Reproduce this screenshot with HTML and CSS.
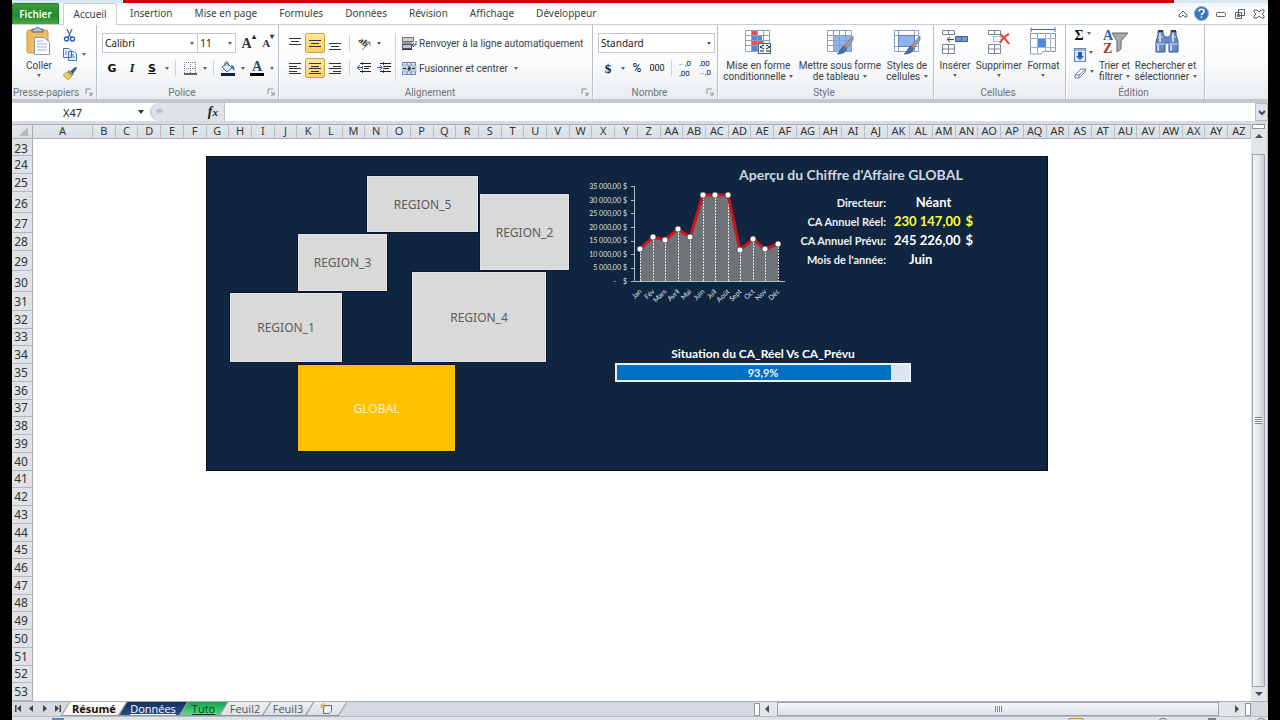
FILE: index.html
```html
<!DOCTYPE html>
<html lang="fr">
<head>
<meta charset="utf-8">
<title>Tableau de bord</title>
<link rel="stylesheet" href="styles.css">
</head>
<body>
<svg class="defs" aria-hidden="true">
  <symbol id="launch" viewBox="0 0 8 8"><path d="M1 6V1H6M4 4L7 7M7 4V7H4" fill="none" stroke="#8a9099"/></symbol>
  <symbol id="brush" viewBox="0 0 18 20"><path d="M17 1L8 11L11 13L17 5Z" fill="#9aa1aa" stroke="#626a75" stroke-width=".7"/><path d="M8 11L11 13C10 18 5 19 1 19C5 17 4 13 8 11Z" fill="#456fae" stroke="#294f87" stroke-width=".7"/><path d="M7.500 10.500L9 9L12 12L11 14Z" fill="#c08a50"/></symbol>
</svg>
<div class="app">
  <div class="title-strip"><i></i></div>
  <nav class="tabs">
    <button class="file">Fichier</button>
    <button class="active">Accueil</button>
    <button>Insertion</button>
    <button>Mise en page</button>
    <button>Formules</button>
    <button>Données</button>
    <button>Révision</button>
    <button>Affichage</button>
    <button>Développeur</button>
    <div class="window-tools">
      <button aria-label="Réduire le ruban"><svg width="10" height="10" viewBox="0 0 10 10"><path d="M1 6L5 2L9 6V8H7L5 6L3 8H1Z" fill="#fff" stroke="#59616c"/></svg></button>
      <button aria-label="Aide"><svg width="15" height="15" viewBox="0 0 15 15"><circle cx="7.500" cy="7.500" r="7" fill="#3d74bd" stroke="#8ba9d4"/><path d="M5 5.500C5 2.500 10 2.500 10 5.500C10 7.200 7.500 7 7.500 9.200M7.500 10.500V12" fill="none" stroke="#fff" stroke-width="1.600"/></svg></button>
      <button aria-label="Réduire"><svg width="12" height="12" viewBox="0 0 12 12"><rect x="1.500" y="4.500" width="9" height="4" rx="1" fill="#fff" stroke="#59616c"/></svg></button>
      <button aria-label="Restaurer"><svg width="12" height="12" viewBox="0 0 12 12"><path d="M4.500 1.500H10.500V7.500H4.500Z M1.500 4.500H7.500V10.500H1.500Z" fill="#fff" stroke="#59616c"/><path d="M3.500 6.500H5.500V8.500H3.500Z" fill="none" stroke="#59616c"/></svg></button>
      <button aria-label="Fermer"><svg width="12" height="12" viewBox="0 0 12 12"><path d="M1 2H4L6 4L8 2H11V4L9 6L11 8V10H8L6 8L4 10H1V8L3 6L1 4Z" fill="#fff" stroke="#59616c"/></svg></button>
    </div>
  </nav>

  <div class="ribbon">
    <section class="group clipboard">
      <div class="body">
        <button class="big">
          <svg width="28" height="30" viewBox="0 0 28 30"><rect x="2" y="3" width="21" height="23" rx="2" fill="#eebb60" stroke="#d09a3f"/><path d="M7 5V2H10C10 0 15 0 15 2H18V5Z" fill="#b9c1ca" stroke="#5c6570"/><path d="M9.500 10.500H19L24.500 15V27.500H9.500Z" fill="#fff" stroke="#8798ae"/><path d="M12 14H18M12 17H22M12 20H22M12 23H22" stroke="#9fb4d3"/></svg>
          <span>Coller</span><i class="arrow"></i>
        </button>
        <div class="stack">
          <button aria-label="Couper"><svg width="13" height="13" viewBox="0 0 13 13"><path d="M4 0L8 9M9 0L5 9" stroke="#5b7193" stroke-width="1.300"/><circle cx="3.500" cy="10" r="2" fill="none" stroke="#2b5fb0" stroke-width="1.400"/><circle cx="9.500" cy="10" r="2" fill="none" stroke="#2b5fb0" stroke-width="1.400"/></svg></button>
          <button aria-label="Copier"><svg width="14" height="13" viewBox="0 0 14 13"><path d="M.5 .5H6L8.500 3V9.500H.5Z M5.500 3.500H11L13.500 6V12.500H5.500Z" fill="#e8f0fb" stroke="#4a72ae"/><path d="M2 4H4M2 6H4M7 7H11M7 9H12" stroke="#4a86d3"/></svg><i class="arrow"></i></button>
          <button aria-label="Reproduire la mise en forme"><svg width="14" height="13" viewBox="0 0 14 13"><path d="M13 0L8 4L10 6L13 2Z" fill="#495e87" stroke="#394b70"/><path d="M6 3L11 7L9 9L4 5Z" fill="#7f8a9c"/><path d="M4 5L9 9L5 13L0 8Z" fill="#f0c95f" stroke="#b88b2c" stroke-width=".7"/></svg></button>
        </div>
      </div>
      <footer><span>Presse-papiers</span><svg class="launch"><use href="#launch"/></svg></footer>
    </section>

    <section class="group font">
      <div class="body rows">
        <div class="row">
          <label class="combo family"><select aria-label="Police"><option>Calibri</option></select></label>
          <label class="combo size"><select aria-label="Taille"><option>11</option></select></label>
          <button class="tool serif grow" aria-label="Agrandir la police">A<sup>▴</sup></button>
          <button class="tool serif shrink" aria-label="Réduire la police">A<sup>▾</sup></button>
        </div>
        <div class="row">
          <button class="tool bold">G</button>
          <button class="tool italic">I</button>
          <button class="tool under">S</button>
          <button class="drop" aria-label="Options de soulignement"><i class="arrow"></i></button>
          <i class="sep"></i>
          <button class="tool" aria-label="Bordures"><svg width="13" height="13" viewBox="0 0 13 13"><path d="M.5 0V12M6.500 0V12M11.500 0V12M0 .5H12M0 6.500H12" stroke="#7f8791" stroke-dasharray="1 1"/><path d="M0 12H13" stroke="#333" stroke-width="1.500"/></svg></button>
          <button class="drop" aria-label="Choix de bordures"><i class="arrow"></i></button>
          <i class="sep"></i>
          <button class="tool" aria-label="Remplissage"><svg width="15" height="15" viewBox="0 0 15 15"><path d="M6 2L11 7L6 11L1 6Z" fill="#e1eaf6" stroke="#47648f"/><path d="M4 5V2C4 0 7 0 7 2V5" fill="none" stroke="#47648f"/><path d="M10 4C13 4 14 8 13 10L11 7Z" fill="#2e6fc5"/><path d="M0 12H14V15H0Z" fill="#0c2256"/></svg></button>
          <button class="drop" aria-label="Couleurs de remplissage"><i class="arrow"></i></button>
          <button class="tool serif color">A</button>
          <button class="drop" aria-label="Couleurs de police"><i class="arrow"></i></button>
        </div>
      </div>
      <footer><span>Police</span><svg class="launch"><use href="#launch"/></svg></footer>
    </section>

    <section class="group align">
      <div class="body">
        <div class="rows">
          <div class="row">
            <button class="tool" aria-label="Aligner en haut"><svg width="13" height="13" viewBox="0 0 13 13"><path d="M0 1.500H12M2 4.500H10M0 7.500H12" stroke="#333"/></svg></button>
            <button class="tool on" aria-label="Aligner au centre"><svg width="13" height="13" viewBox="0 0 13 13"><path d="M0 3.500H12M2 6.500H10M0 9.500H12" stroke="#333"/></svg></button>
            <button class="tool" aria-label="Aligner en bas"><svg width="13" height="13" viewBox="0 0 13 13"><path d="M0 6.500H12M2 9.500H10M0 12.500H12" stroke="#333"/></svg></button>
            <i class="sep"></i>
            <button class="tool" aria-label="Orientation"><svg class="orient" width="15" height="13" viewBox="0 0 15 13"><g transform="translate(1 4) rotate(40)"><text>ab</text></g><path d="M5 13L13 5M13 9V5H9" fill="none" stroke="#777"/></svg></button>
            <button class="drop" aria-label="Choix d'orientation"><i class="arrow"></i></button>
          </div>
          <div class="row">
            <button class="tool" aria-label="Aligner à gauche"><svg width="13" height="13" viewBox="0 0 13 13"><path d="M0 1.500H12M0 4.500H8M0 6.500H12M0 9.500H8M0 11.500H12" stroke="#333"/></svg></button>
            <button class="tool on" aria-label="Centrer"><svg width="13" height="13" viewBox="0 0 13 13"><path d="M0 1.500H12M2 4.500H10M0 6.500H12M2 9.500H10M0 11.500H12" stroke="#333"/></svg></button>
            <button class="tool" aria-label="Aligner à droite"><svg width="13" height="13" viewBox="0 0 13 13"><path d="M0 1.500H12M4 4.500H12M0 6.500H12M4 9.500H12M0 11.500H12" stroke="#333"/></svg></button>
            <i class="sep"></i>
            <button class="tool" aria-label="Diminuer le retrait"><svg width="14" height="12" viewBox="0 0 14 12"><path d="M3 1.500H14M7 4.500H14M7 6.500H12M3 9.500H14" stroke="#222"/><path d="M6 5.500H0M3 3L0 5.500L3 8" fill="none" stroke="#2d65bb"/><path d="M5.500 0V12" stroke="#555" stroke-dasharray="1 1"/></svg></button>
            <button class="tool" aria-label="Augmenter le retrait"><svg width="14" height="12" viewBox="0 0 14 12"><path d="M3 1.500H14M7 4.500H14M7 6.500H12M3 9.500H14" stroke="#222"/><path d="M0 5.500H5M3 3L5 5.500L3 8" fill="none" stroke="#2d65bb"/><path d="M6.500 0V12" stroke="#555" stroke-dasharray="1 1"/></svg></button>
          </div>
        </div>
        <i class="sep tall"></i>
        <div class="rows">
          <button class="row wide"><svg width="15" height="13" viewBox="0 0 15 13"><rect x=".5" y=".5" width="11" height="4" fill="#c9ceca" stroke="#777"/><rect x=".5" y="7.500" width="9" height="4" fill="#b8c8e0" stroke="#555"/><path d="M0 6H10M0 12.500H10" stroke="#333"/><path d="M14 4V8H11M12 6L10 8L12 10" fill="none" stroke="#31527f"/></svg>Renvoyer à la ligne automatiquement</button>
          <button class="row wide"><svg width="15" height="13" viewBox="0 0 15 13"><path d="M.5 .5H13.500V12.500H.5Z M5 0V3M9 0V3M5 10V12M9 10V12" fill="#e6edf7" stroke="#6280aa"/><rect x="0" y="3" width="14" height="7" fill="#bfd1ea" stroke="#6280aa" stroke-width=".5"/><path d="M1 6.500H4M13 6.500H10M6 5H8V8H6V6.500H8" fill="none" stroke="#222"/></svg>Fusionner et centrer<i class="arrow"></i></button>
        </div>
      </div>
      <footer><span>Alignement</span><svg class="launch"><use href="#launch"/></svg></footer>
    </section>

    <section class="group number">
      <div class="body rows">
        <div class="row"><label class="combo format"><select aria-label="Format de nombre"><option>Standard</option></select></label></div>
        <div class="row">
          <button class="tool serif dollar">$</button>
          <button class="drop" aria-label="Formats monétaires"><i class="arrow"></i></button>
          <button class="tool pct">%</button>
          <button class="tool zeros">000</button>
          <i class="sep"></i>
          <button class="tool decimals"><span><b>←</b>,0</span><span>,00</span></button>
          <button class="tool decimals"><span>,00</span><span><b>→</b>,0</span></button>
        </div>
      </div>
      <footer><span>Nombre</span><svg class="launch"><use href="#launch"/></svg></footer>
    </section>

    <section class="group style">
      <div class="body">
        <button class="big">
          <svg width="28" height="30" viewBox="0 0 28 30"><rect x="1.500" y="3.500" width="24" height="21" fill="#fff"/><path d="M8 3H14V9H8Z M8 14H19V19H8Z" fill="#e0534f"/><path d="M8 9H18V14H8Z M8 19H13V24H8Z" fill="#5b82dc"/><path d="M1.500 3.500H25.500V24.500H1.500Z M1 8.500H26M1 13.500H26M1 18.500H26M7.500 3V25M13.500 3V25M19.500 3V25" fill="none" stroke="#8ba0c2"/><rect x="14.500" y="16.500" width="12" height="10" fill="#f5f8fc" stroke="#52657e"/><path d="M20 18L16 20L20 22M16 24H20M22 18L26 20L22 22M22 24H26" fill="none" stroke="#222"/></svg>
          <span>Mise en forme</span><span>conditionnelle <i class="arrow"></i></span>
        </button>
        <button class="big">
          <svg width="28" height="30" viewBox="0 0 28 30"><rect x="1.500" y="3.500" width="24" height="21" fill="#fff"/><rect x="7" y="9" width="19" height="16" fill="#8fb4ed"/><path d="M1.500 3.500H25.500V24.500H1.500Z M1 8.500H26M1 13.500H26M1 18.500H26M7.500 3V25M13.500 3V25M19.500 3V25" fill="none" stroke="#8ba0c2"/><use href="#brush" x="10" y="8" width="18" height="20"/></svg>
          <span>Mettre sous forme</span><span>de tableau <i class="arrow"></i></span>
        </button>
        <button class="big">
          <svg width="28" height="30" viewBox="0 0 28 30"><path d="M1.500 3.500H25.500V24.500H1.500Z M1 8.500H26M1 19.500H26M5.500 3V25M21.500 3V25" fill="#fff" stroke="#8ba0c2"/><rect x="5.500" y="8.500" width="16" height="11" fill="#8fb4ed" stroke="#5c83bd"/><use href="#brush" x="10" y="8" width="18" height="20"/></svg>
          <span>Styles de</span><span>cellules <i class="arrow"></i></span>
        </button>
      </div>
      <footer><span>Style</span></footer>
    </section>

    <section class="group cells">
      <div class="body">
        <button class="big">
          <svg width="28" height="30" viewBox="0 0 28 30"><path d="M1.500 3.500H13.500V7.500H1.500Z M7.500 3V8M1.500 17.500H13.500V26.500H1.500Z M1 22H14M7.500 17V27" fill="#fff" stroke="#778699"/><path d="M14.500 9.500H26.500V14.500H14.500Z M20.500 9V15" fill="#7599dc" stroke="#375ca1"/><path d="M13 12.500H6M9 10L6 12.500L9 15" fill="none" stroke="#31527f"/></svg>
          <span>Insérer</span><i class="arrow"></i>
        </button>
        <button class="big">
          <svg width="28" height="30" viewBox="0 0 28 30"><path d="M3.500 3.500H15.500V7.500H3.500Z M9.500 3V8M3.500 17.500H15.500V26.500H3.500Z M3 22H16M9.500 17V27" fill="#fff" stroke="#778699"/><path d="M8.500 9.500H16V14.500H8.500Z" fill="#fff" stroke="#5c7dab" stroke-dasharray="1 1"/><path d="M15 7C19 10 21 13 24 17M24 7C20 9 17 12 15 16" fill="none" stroke="#df4436" stroke-width="2"/></svg>
          <span>Supprimer</span><i class="arrow"></i>
        </button>
        <button class="big">
          <svg width="28" height="30" viewBox="0 0 28 30"><path d="M2 2.500H26M2 .5V5M26 .5V5" stroke="#3a6cb3"/><path d="M1.500 6.500H26.500V24.500H14L12 27H1.500Z" fill="#fff" stroke="#8499b9"/><path d="M1 11.500H27M1 20.500H27M8.500 6V26M16.500 6V25M21.500 6V25" stroke="#a0b4d1"/><rect x="9" y="12" width="8" height="8" fill="#4f88e0"/></svg>
          <span>Format</span><i class="arrow"></i>
        </button>
      </div>
      <footer><span>Cellules</span></footer>
    </section>

    <section class="group edit">
      <div class="body">
        <div class="stack">
          <button class="serif sigma" aria-label="Somme">Σ<i class="arrow"></i></button>
          <button aria-label="Remplissage"><svg width="12" height="14" viewBox="0 0 12 14"><rect x=".5" y=".5" width="11" height="13" fill="#dce7f7" stroke="#6b8ab9"/><path d="M1 2H11" stroke="#6b8ab9"/><path d="M4 4H8V8H10L6 12L2 8H4Z" fill="#235dc0"/></svg><i class="arrow"></i></button>
          <button aria-label="Effacer"><svg width="13" height="12" viewBox="0 0 13 12"><path d="M7 1H12L11 4L5 10H1V7Z M1 7H5L11 2M5 7V10" fill="#fff" stroke="#6d7f9c"/></svg><i class="arrow"></i></button>
        </div>
        <button class="big">
          <svg width="28" height="30" viewBox="0 0 28 30"><text x="2" y="13" class="icon-a">A</text><text x="2" y="26" class="icon-z">Z</text><path d="M11 6H27L20 14V22L16 25V14Z" fill="#a5a9ae" stroke="#666b72"/></svg>
          <span>Trier et</span><span>filtrer <i class="arrow"></i></span>
        </button>
        <button class="big">
          <svg width="28" height="30" viewBox="0 0 28 30"><path d="M5 4H10V7L12 10H16L18 7V4H23V8L25 15V25H16V16H12V25H3V15L5 8Z" fill="#688bc5" stroke="#35568d"/><path d="M5 4H10M18 4H23" stroke="#2a3e63" stroke-width="2"/><path d="M3 17H12M16 17H25M5 10H10M18 10H23" stroke="#d5e2f7"/><path d="M5 18V24M18 18V24M7 6V15M20 6V15" stroke="#c6d7f2" stroke-width="2"/></svg>
          <span>Rechercher et</span><span>sélectionner <i class="arrow"></i></span>
        </button>
      </div>
      <footer><span>Édition</span></footer>
    </section>
  </div>

  <div class="formula-bar">
    <label class="name-box"><input aria-label="Zone Nom" value="X47"><i class="arrow"></i></label>
    <div class="fx"><i></i><button><em>f</em>x</button></div>
    <input class="formula" aria-label="Barre de formule">
    <button class="expand" aria-label="Développer"><svg width="8" height="6" viewBox="0 0 8 6"><path d="M1 1L4 4L7 1" fill="none" stroke="#444b55" stroke-width="2"/></svg></button>
  </div>

  <main class="workbook">
    <div class="corner"><svg width="10" height="10" viewBox="0 0 10 10"><path d="M9 0V9H0Z" fill="#b4bac2"/></svg></div>
    <div class="columns">
      <span class="first">A</span><span>B</span><span>C</span><span>D</span><span>E</span><span>F</span><span>G</span><span>H</span><span>I</span><span>J</span><span>K</span><span>L</span><span>M</span><span>N</span><span>O</span><span>P</span><span>Q</span><span>R</span><span>S</span><span>T</span><span>U</span><span>V</span><span>W</span><span>X</span><span>Y</span><span>Z</span><span>AA</span><span>AB</span><span>AC</span><span>AD</span><span>AE</span><span>AF</span><span>AG</span><span>AH</span><span>AI</span><span>AJ</span><span>AK</span><span>AL</span><span>AM</span><span>AN</span><span>AO</span><span>AP</span><span>AQ</span><span>AR</span><span>AS</span><span>AT</span><span>AU</span><span>AV</span><span>AW</span><span>AX</span><span>AY</span><span>AZ</span>
    </div>
    <div class="vscroll"><i class="split"></i><i class="up"></i><div class="thumb"><i></i></div><i class="down"></i></div>
    <div class="row-heads">
      <span class="h17">23</span><span class="h18">24</span><span class="h18">25</span><span class="h21">26</span><span class="h20">27</span><span class="h18">28</span><span class="h20">29</span><span class="h21">30</span><span class="h19">31</span><span>32</span><span>33</span><span>34</span><span>35</span><span>36</span><span>37</span><span>38</span><span>39</span><span>40</span><span>41</span><span>42</span><span>43</span><span>44</span><span>45</span><span>46</span><span>47</span><span>48</span><span>49</span><span>50</span><span>51</span><span>52</span><span>53</span>
    </div>
    <div class="sheet">
      <div class="dashboard">
        <button class="region r5">REGION_5</button>
        <button class="region r2">REGION_2</button>
        <button class="region r3">REGION_3</button>
        <button class="region r4">REGION_4</button>
        <button class="region r1">REGION_1</button>
        <button class="region global">GLOBAL</button>

        <svg class="chart" width="200" height="124" viewBox="588 180 200 124" role="img" aria-label="Chiffre d'affaires mensuel">
          <path d="M640 281V249L653 237L665 240L678 229L690 237L703 195L715 195L728 195L740 250L753 239L765 249L778 244V281Z" fill="#6f7276"/>
          <path d="M640.500 249V281M653.500 237V281M665.500 240V281M678.500 229V281M690.500 237V281M703.500 195V281M715.500 195V281M728.500 195V281M740.500 250V281M753.500 239V281M765.500 249V281M778.500 244V281" stroke="#e3e5e8" stroke-dasharray="2 1"/>
          <path d="M634.500 186V281.500H785M631 186.500H634M631 200.500H634M631 213.500H634M631 227.500H634M631 241.500H634M631 254.500H634M631 268.500H634M631 281.500H634" fill="none" stroke="#a9bccb"/>
          <path d="M640 249L653 237L665 240L678 229L690 237L703 195L715 195L728 195L740 250L753 239L765 249L778 244" fill="none" stroke="#c9151b" stroke-width="3"/>
          <g fill="#fff" stroke="#222" stroke-width=".6"><circle cx="640" cy="249" r="3"/><circle cx="653" cy="237" r="3"/><circle cx="665" cy="240" r="3"/><circle cx="678" cy="229" r="3"/><circle cx="690" cy="237" r="3"/><circle cx="703" cy="195" r="3"/><circle cx="715" cy="195" r="3"/><circle cx="728" cy="195" r="3"/><circle cx="740" cy="250" r="3"/><circle cx="753" cy="239" r="3"/><circle cx="765" cy="249" r="3"/><circle cx="778" cy="244" r="3"/></g>
          <g class="scale"><text x="621" y="189">35 000,00</text><text x="621" y="203">30 000,00</text><text x="621" y="216">25 000,00</text><text x="621" y="230">20 000,00</text><text x="621" y="243">15 000,00</text><text x="621" y="257">10 000,00</text><text x="621" y="270">5 000,00</text><text x="616" y="284">-</text><text x="627" y="189">$</text><text x="627" y="203">$</text><text x="627" y="216">$</text><text x="627" y="230">$</text><text x="627" y="243">$</text><text x="627" y="257">$</text><text x="627" y="270">$</text><text x="627" y="284">$</text></g>
          <g class="months"><text transform="translate(642 292) rotate(-45)">Jan</text><text transform="translate(655 292) rotate(-45)">Fév</text><text transform="translate(667 292) rotate(-45)">Mars</text><text transform="translate(680 292) rotate(-45)">Avril</text><text transform="translate(692 292) rotate(-45)">Mai</text><text transform="translate(705 292) rotate(-45)">Juin</text><text transform="translate(717 292) rotate(-45)">Juil</text><text transform="translate(730 292) rotate(-45)">Août</text><text transform="translate(742 292) rotate(-45)">Sept</text><text transform="translate(755 292) rotate(-45)">Oct</text><text transform="translate(767 292) rotate(-45)">Nov</text><text transform="translate(780 292) rotate(-45)">Déc</text></g>
        </svg>

        <div class="summary">
          <h1>Aperçu du Chiffre d'Affaire GLOBAL</h1>
          <dl>
            <dt>Directeur:</dt><dd class="name">Néant</dd>
            <dt>CA Annuel Réel:</dt><dd class="real"><span>230 147,00</span><span>$</span></dd>
            <dt>CA Annuel Prévu:</dt><dd><span>245 226,00</span><span>$</span></dd>
            <dt>Mois de l'année:</dt><dd class="month">Juin</dd>
          </dl>
        </div>

        <div class="situation">
          <h2>Situation du CA_Réel Vs CA_Prévu</h2>
          <div class="bar"><i style="width:93.9%"></i><span>93,9%</span></div>
        </div>
      </div>
    </div>
  </main>

  <div class="sheet-bar">
    <div class="sheet-nav">
      <button aria-label="Première feuille"><svg width="7" height="7" viewBox="0 0 7 7"><path d="M0 0H1.500V7H0Z M6 0V7L2 3.500Z"/></svg></button>
      <button aria-label="Feuille précédente"><svg width="7" height="7" viewBox="0 0 7 7"><path d="M5 0V7L1 3.500Z"/></svg></button>
      <button aria-label="Feuille suivante"><svg width="7" height="7" viewBox="0 0 7 7"><path d="M2 0V7L6 3.500Z"/></svg></button>
      <button aria-label="Dernière feuille"><svg width="7" height="7" viewBox="0 0 7 7"><path d="M1 0V7L5 3.500Z M5.500 0H7V7H5.500Z"/></svg></button>
    </div>
    <div class="sheet-tabs">
      <button class="current">Résumé</button>
      <button class="navy">Données</button>
      <button class="green">Tuto</button>
      <button>Feuil2</button>
      <button>Feuil3</button>
      <button class="new" aria-label="Insérer une feuille"><svg width="13" height="12" viewBox="0 0 13 12"><path d="M3.500 2.500H11.500V8L9 10.500H3.500Z" fill="#eaf1fb" stroke="#49699b"/><path d="M3 0V6M0 3H6M1 1L5 5M5 1L1 5" stroke="#e2a135"/></svg></button>
    </div>
    <div class="hscroll"><i class="split"></i><i class="left"></i><div class="thumb"><i></i></div><i class="right"></i><i class="split"></i></div>
  </div>
  <div class="status"><i class="macro"></i><i class="view"></i><i class="zoom-btn"></i><i class="knob"></i><i class="zoom-btn"></i></div>
</div>
</body>
</html>
```
FILE: styles.css
```css
* { box-sizing: border-box; }
body { margin: 0; background: #000; color: #3b3f45; font: 10px/11px Roboto, "Open Sans", sans-serif; }
button { padding: 0; border: 0; background: none; color: inherit; font: inherit; white-space: nowrap; }
input, select { min-width: 0; border: 0; border-radius: 0; background: #fff; color: #222; font: inherit; }
svg { flex: none; }
.defs { display: none; }
.app { display: flex; flex-direction: column; height: 100vh; min-height: 600px; margin: 0 12px; background: #e0e4e9; overflow: hidden; }

.title-strip { flex: none; height: 3px; padding: 0 94px 0 111px; background: #d8e8f3; }
.title-strip i { display: block; height: 3px; background: #ce0000; }

.tabs { display: flex; flex: none; height: 22px; background: linear-gradient(#eef4fa, #fff 6px); border-bottom: 1px solid #c8cdd3; font-family: "Noto Sans", sans-serif; }
.tabs > button { padding: 0 11px; }
.tabs .file { width: 47px; padding: 0; border: 1px solid #257b2b; border-bottom: 0; border-radius: 2px 2px 0 0; background: linear-gradient(#3d9b3c, #248a2b 60%, #4ca847); color: #fff; font-weight: 600; }
.tabs .active { height: 22px; width: 54px; margin: 0 2px 0 4px; padding: 0; border: 1px solid #c8cdd3; border-bottom: 0; border-radius: 3px 3px 0 0; background: #fff; }
.window-tools { display: flex; gap: 4px; margin-left: auto; padding-right: 2px; }
.window-tools button { width: 15px; display: grid; place-items: center; }

.ribbon { display: flex; flex: none; height: 74px; background: linear-gradient(#fff, #fafbfc 50%, #e9ecf0); }
.group { display: flex; flex-direction: column; flex: none; border-right: 1px solid #b9bec5; box-shadow: 1px 0 #fff; }
.clipboard { width: 85px; }
.font { width: 182px; }
.align { width: 314px; }
.number { width: 125px; }
.style { width: 216px; }
.cells { width: 132px; }
.edit { width: 139px; }
.body { display: flex; flex: 1; min-height: 0; }
.group footer { display: flex; align-items: center; height: 14px; padding: 0 3px 0 0; color: #6c727b; }
.group footer span { flex: 1; text-align: center; }
.clipboard footer span { text-align: left; padding-left: 1px; }
.launch { width: 8px; height: 8px; }
.rows { display: flex; flex-direction: column; gap: 5px; padding: 8px 0 0 5px; }
.row { display: flex; align-items: center; height: 20px; }
.arrow { display: inline-block; flex: none; border: 2px solid transparent; border-top: 3px solid #5b6169; border-bottom: 0; vertical-align: middle; }
.tool { display: grid; place-items: center; width: 20px; height: 20px; color: #111; }
.tool.on { border: 1px solid #c9a344; border-radius: 2px; background: linear-gradient(#ffe8a0, #fdd25d); }
.align .rows .row { padding-left: 1px; }
.drop { display: grid; place-items: center; width: 9px; height: 20px; }
.sep { flex: none; width: 1px; height: 16px; margin: 0 4px; background: #d0d4d9; }
.sep.tall { height: 48px; margin: 8px 0 0 1px; }
.combo { position: relative; height: 20px; border: 1px solid #c5c9cf; background: #fff; }
.combo::after { content: ""; position: absolute; right: 3px; top: 8px; border: 2px solid transparent; border-top: 3px solid #5b6169; border-bottom: 0; }
.combo select { width: 100%; height: 18px; padding: 0 2px; appearance: none; background: transparent; font-family: "Noto Sans", sans-serif; }
.family { width: 98px; }
.size { width: 38px; border-left: 0; }
.format { width: 117px; }
.serif { font-family: "Liberation Serif", serif; font-weight: bold; }
.grow, .shrink { display: flex; align-items: flex-end; justify-content: center; padding-bottom: 3px; color: #333; line-height: 13px; }
.grow { font-size: 14px; margin-left: 3px; }
.shrink { font-size: 11px; }
.tool sup { align-self: flex-start; font-size: 8px; line-height: 8px; }
.bold { font: bold 11px "DejaVu Sans", sans-serif; }
.italic { font: italic bold 12px "Liberation Serif", serif; }
.under { font: bold 11px "DejaVu Sans", sans-serif; text-decoration: underline; }
.color { height: 15px; border: 3px solid transparent; border-width: 0 3px 3px; font-size: 14px; line-height: 12px; color: #2b4675; background: linear-gradient(#000, #000) 3px 12px / 14px 3px no-repeat border-box; }
.wide { gap: 2px; }
.wide .arrow { margin-left: 4px; }
.orient { overflow: visible; }
.orient text { font: bold 9px "Liberation Serif", serif; fill: #222; }
.dollar { font-size: 13px; }
.pct { font-size: 12px; }
.zeros { font-size: 9px; }
.decimals { display: block; font-size: 8px; line-height: 9px; text-align: right; padding: 1px 3px 0 0; }
.decimals span { display: block; }
.decimals b { color: #2e64b0; font-size: 7px; }
.big { display: flex; flex-direction: column; align-items: center; padding-top: 2px; }
.big svg { margin-bottom: 3px; }
.big .arrow { margin-top: 3px; }
.big span .arrow { margin: 0 0 1px 1px; }
.clipboard .big { width: 48px; margin-left: 3px; }
.stack { display: flex; flex-direction: column; padding-top: 1px; }
.stack button { display: flex; align-items: center; gap: 5px; height: 19px; }
.style .body, .cells .body { justify-content: space-evenly; }
.edit .body { justify-content: space-evenly; padding: 0 3px 0 4px; }
.edit .stack button { gap: 3px; }
.edit .stack .arrow { margin: 0 0 5px; }
.edit .big svg { margin-left: 2px; }
.sigma { font-size: 14px; color: #111; }
.icon-a, .icon-z { font: bold 14px "Liberation Serif", serif; }
.icon-a { fill: #2e63ae; }
.icon-z { fill: #9d352a; }

.formula-bar { display: flex; flex: none; height: 25px; border: solid #d8dce1; border-width: 4px 0 3px; border-top-color: #c3c8ce; background: #fff; }
.name-box { display: flex; align-items: center; width: 138px; padding-right: 6px; }
.name-box input { flex: 1; height: 16px; padding: 0 5px 0 0; text-align: center; font: 11px "Noto Sans", sans-serif; }
.name-box .arrow { border-width: 3px; border-top-width: 4px; border-bottom: 0; border-top-color: #333; }
.fx { display: flex; align-items: center; justify-content: space-between; width: 75px; padding: 0 6px 0 5px; border: 1px solid #b9bec5; border-width: 0 1px; border-radius: 10px 0 0 10px; background: #dfe3e8; }
.fx i { width: 7px; height: 7px; border-radius: 50%; background: linear-gradient(#a9afb7, #e8ebef); }
.fx button { font: italic bold 11px "Liberation Serif", serif; color: #222; }
.fx em { font-size: 14px; }
.formula { flex: 1; }
.expand { width: 13px; border: 1px solid #b5bac1; background: #e0e4e9; }

.workbook { display: grid; flex: 1; min-height: 0; grid-template: 15px minmax(0, 1fr) / 21px minmax(0, 1fr) 15px; padding-right: 1px; border-right: 1px solid #bcc1c8; font-family: "Noto Sans", sans-serif; }
.corner, .columns span { border: solid #a9afb7; border-width: 1px 1px 1px 0; background: linear-gradient(#e3e7ec, #dbe0e6); }
.corner { display: grid; place-items: center end; padding-right: 3px; }
.columns { display: flex; color: #333; font-size: 11px; line-height: 12px; }
.columns span { flex: 1 1 0; min-width: 0; text-align: center; border-right-color: #b9bec5; }
.columns .first { flex: 0 0 60px; }
.vscroll { display: flex; flex-direction: column; align-items: center; grid-row: 1 / 3; grid-column: 3; background: #e2e5ea; }
.split { flex: none; border: 1px solid #8b929c; background: #fff; }
.vscroll .split { width: 13px; height: 5px; }
.up, .down { margin: 5px 0 16px; border: 4px solid transparent; border-bottom: 4px solid #484f5a; border-top: 0; }
.down { margin: 5px 0; border-top: 4px solid #484f5a; border-bottom: 0; }
.thumb { display: grid; place-items: center; flex: 1; border: 1px solid #9da3ad; }
.vscroll .thumb { width: 13px; background: linear-gradient(90deg, #f5f6f8, #e1e4e9 60%, #c9cdd5); }
.vscroll .thumb i { width: 7px; height: 7px; background: repeating-linear-gradient(#7d848f 0 1px, #fff 1px 2px); }
.row-heads { display: flex; flex-direction: column; color: #333; font-size: 12px; background: #dfe3e8; border-right: 1px solid #a9afb7; }
.row-heads span { display: flex; align-items: flex-end; justify-content: center; flex: 1 1 0; min-height: 0; padding: 0 2px 2px 0; line-height: 13px; border-bottom: 1px solid #b2b8c0; }
.row-heads .h17 { flex: 0 0 17px; padding-bottom: 0; }
.row-heads .h18 { flex: 0 0 18px; }
.row-heads .h19 { flex: 0 0 19px; }
.row-heads .h20 { flex: 0 0 20px; }
.row-heads .h21 { flex: 0 0 21px; }
.sheet { position: relative; background: #fff; overflow: hidden; }

.dashboard { position: absolute; left: 173px; top: 17px; width: 842px; height: 315px; border: 1px solid #06101f; background: #10253f; color: #eef1f5; font-family: Lato, sans-serif; font-weight: bold; }
.region { position: absolute; background: #d9d9d9; border: 1px solid #e4e4e4; outline: 1px solid #071830; color: #5c5c5c; font: 12px "Noto Sans", sans-serif; }
.r5 { left: 160px; top: 19px; width: 111px; height: 56px; }
.r2 { left: 273px; top: 37px; width: 89px; height: 76px; }
.r3 { left: 91px; top: 77px; width: 89px; height: 57px; }
.r4 { left: 205px; top: 115px; width: 134px; height: 90px; }
.r1 { left: 23px; top: 136px; width: 112px; height: 69px; }
.global { left: 91px; top: 208px; width: 157px; height: 86px; border-color: #ffc000; background: #ffc000; color: #fff3d0; }
.chart { position: absolute; left: 381px; top: 23px; }
.chart text { fill: #dbe2ea; font-size: 7px; font-weight: normal; text-anchor: end; }
.chart .scale text { font-family: Lato, sans-serif; }
.chart .months text { font-size: 7px; }
.summary { position: absolute; left: 532px; top: 9px; width: 234px; }
.summary h1 { margin: 0 0 10px; font-size: 14px; line-height: 17px; color: #cfd8e4; white-space: nowrap; }
.summary dl { display: grid; grid-template-columns: 89px 79px; grid-auto-rows: 19px; column-gap: 8px; margin: 0; padding-left: 58px; align-items: center; }
.summary dt { text-align: right; font-size: 11px; white-space: nowrap; }
.summary dd { display: flex; justify-content: space-between; margin: 0; color: #fff; font-size: 13px; white-space: nowrap; }
.summary .name { justify-content: center; }
.summary .month { padding-left: 15px; }
.summary .real { color: #ffff3c; }
.situation { position: absolute; left: 408px; top: 189px; width: 296px; }
.situation h2 { margin: 0 0 2px; font-size: 12px; line-height: 15px; text-align: center; color: #fff; }
.bar { position: relative; display: flex; height: 19px; border: 2px solid #eaf1fa; background: #dce6f2; }
.bar i { background: #0070c0; }
.bar span { position: absolute; inset: 0; font-size: 11px; line-height: 15px; text-align: center; }

.sheet-bar { display: flex; flex: none; height: 15px; border-top: 1px solid #a9afb7; background: #d5dae1; }
.sheet-nav { display: flex; gap: 5px; padding: 0 8px 0 2px; }
.sheet-nav button { width: 8px; height: 13px; display: grid; place-items: center; fill: #3d4550; }
.sheet-tabs { display: flex; gap: 7px; color: #555; font: 11px/14px "Open Sans", sans-serif; }
.sheet-tabs button { position: relative; z-index: 0; width: 36px; }
.sheet-tabs button::before { content: ""; position: absolute; z-index: -1; inset: 0 -4px; transform: skewX(-32deg); border: solid #8f969f; border-width: 0 1px 1px; background: linear-gradient(#eceff3, #dde1e7); }
.sheet-tabs .current { width: 50px; color: #111; font-weight: bold; }
.sheet-tabs .current::before { background: linear-gradient(#fff, #fdf0e5); }
.sheet-tabs .navy { width: 54px; color: #fff; text-decoration: underline; }
.sheet-tabs .navy::before { background: linear-gradient(#16305f, #264d8c); }
.sheet-tabs .green { width: 33px; color: #123d21; text-decoration: underline; }
.sheet-tabs .green::before { background: linear-gradient(#12a54b, #5bd689); }
.sheet-tabs .new { width: 26px; display: grid; place-items: center; }
.hscroll { display: flex; align-items: center; width: 497px; margin: 0 17px 0 auto; background: #e2e5ea; }
.hscroll .split { width: 6px; height: 13px; }
.left, .right { margin: 0 8px 0 5px; border: 4px solid transparent; border-right: 4px solid #484f5a; border-left: 0; }
.right { margin: 0 6px 0 16px; border-left: 4px solid #484f5a; border-right: 0; }
.hscroll .thumb { height: 14px; background: linear-gradient(#f4f6f9, #dfe3ea); }
.hscroll .thumb i { width: 7px; height: 6px; background: repeating-linear-gradient(90deg, #7d848f 0 1px, #fff 1px 2px); }

.status { display: flex; flex: none; gap: 40px; height: 4px; padding: 1px 2px 0 40px; border-top: 1px solid #b4bac2; background: #dfe3e8; overflow: hidden; }
.status i { flex: none; height: 8px; }
.macro { width: 12px; background: #5f89bd; }
.view { width: 16px; margin-left: auto; margin-right: 34px; border: 1px solid #b99746; border-radius: 2px; background: #ffe080; }
.zoom-btn { width: 10px; border: 1px solid #717984; border-radius: 50%; }
.knob { width: 8px; background: #7d8590; }
```
